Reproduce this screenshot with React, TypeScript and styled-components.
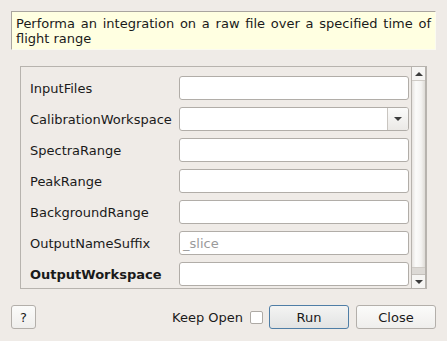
import React from "react";
import styled, { createGlobalStyle } from "styled-components";

const Global = createGlobalStyle`
  html, body { margin: 0; padding: 0; background: #efebe7; }
  body { font-family: "DejaVu Sans", "Noto Sans", sans-serif; font-size: 13px; color: #202020; }
  * { box-sizing: border-box; }
`;

const Dialog = styled.div`
  width: 447px;
  height: 341px;
  display: flex;
  flex-direction: column;
  padding: 11px 11px 12px 11px;
  background: #efebe7;
`;

const Description = styled.div`
  background: #ffffe1;
  border-top: 1px solid #a9a59f;
  border-left: 1px solid #a9a59f;
  border-right: 1px solid #fbfbf0;
  border-bottom: 1px solid #fbfbf0;
  padding: 4px 4px 3px 4px;
  line-height: 15px;
  height: 39px;
  text-align: justify;
  font-size: 13px;
  color: #1a1a1a;
`;

const Frame = styled.div`
  margin: 16px 9px 0 9px;
  height: 223px;
  border: 1px solid #b7b3ae;
  display: flex;
  overflow: hidden;
`;

const Rows = styled.div`
  flex: 1;
  display: flex;
  flex-direction: column;
  gap: 7px;
  padding: 9px 3px 0 9px;
  overflow: hidden;
`;

const Row = styled.div`
  display: grid;
  grid-template-columns: 149px 230px;
  align-items: center;
  height: 24px;
  flex: none;
`;

const Label = styled.span<{ $bold?: boolean }>`
  font-weight: ${(p) => (p.$bold ? "bold" : "normal")};
  white-space: nowrap;
  color: #1a1a1a;
`;

const Field = styled.div`
  height: 24px;
  background: #ffffff;
  border: 1px solid #b1ada8;
  border-radius: 3px;
  display: flex;
  align-items: center;
  padding: 0 3px;
  color: #9a9a9a;
  font-size: 13px;
`;

const Combo = styled.div`
  height: 24px;
  background: #ffffff;
  border: 1px solid #b1ada8;
  border-radius: 3px;
  display: flex;
  overflow: hidden;
`;

const ComboText = styled.div`
  flex: 1;
`;

const ComboButton = styled.div`
  width: 21px;
  border-left: 1px solid #c9c5c0;
  background: linear-gradient(#fbfbfa, #ebe9e6);
  display: flex;
  align-items: center;
  justify-content: center;
`;

const Arrow = styled.div<{ $up?: boolean }>`
  width: 0;
  height: 0;
  border-left: 4px solid transparent;
  border-right: 4px solid transparent;
  ${(p) =>
    p.$up
      ? "border-bottom: 4px solid #3c3c3c;"
      : "border-top: 4px solid #3c3c3c;"}
`;

const ScrollBar = styled.div`
  width: 15px;
  display: flex;
  flex-direction: column;
  border-left: 1px solid #b7b3ae;
  border-right: 1px solid #b7b3ae;
`;

const ScrollButton = styled.div`
  height: 13px;
  flex: none;
  display: flex;
  align-items: center;
  justify-content: center;
  background: #f6f5f3;
`;

const Handle = styled.div`
  flex: 1;
  border-top: 1px solid #cfcbc6;
  border-bottom: 1px solid #cfcbc6;
  background: linear-gradient(to right, #e7e4e1, #fbfbfa 30%, #f4f3f1 70%, #dedbd7);
`;

const Trough = styled.div`
  height: 7px;
  flex: none;
  background: #dcd9d5;
  border-bottom: 1px solid #c4c0bb;
`;

const Footer = styled.div`
  margin-top: 16px;
  display: flex;
  align-items: center;
  height: 24px;
`;

const Button = styled.button<{ $primary?: boolean; $w: number }>`
  width: ${(p) => p.$w}px;
  height: 24px;
  padding: 0;
  font-family: "DejaVu Sans", "Noto Sans", sans-serif;
  font-size: 13px;
  color: #1a1a1a;
  border-radius: 3px;
  border: 1px solid ${(p) => (p.$primary ? "#4f7ea6" : "#b3afaa")};
  background: ${(p) =>
    p.$primary
      ? "linear-gradient(#f4f4f3, #e2e3e3)"
      : "linear-gradient(#fbfbfa, #efeeec)"};
`;

const Spacer = styled.div`
  flex: 1;
`;

const KeepOpen = styled.span`
  margin-right: 7px;
  color: #1a1a1a;
`;

const Check = styled.div`
  width: 13px;
  height: 13px;
  background: #ffffff;
  border: 1px solid #aeaaa5;
  border-radius: 2px;
  margin-right: 6px;
`;

const Gap = styled.div`
  width: 7px;
`;

const fields: { label: string; kind: "text" | "combo"; placeholder?: string; bold?: boolean }[] = [
  { label: "InputFiles", kind: "text" },
  { label: "CalibrationWorkspace", kind: "combo" },
  { label: "SpectraRange", kind: "text" },
  { label: "PeakRange", kind: "text" },
  { label: "BackgroundRange", kind: "text" },
  { label: "OutputNameSuffix", kind: "text", placeholder: "_slice" },
  { label: "OutputWorkspace", kind: "text", bold: true },
];

export default function App() {
  return (
    <>
      <Global />
      <Dialog>
        <Description>
          Performa an integration on a raw file over a specified time of flight range
        </Description>
        <Frame>
          <Rows>
            {fields.map((f) => (
              <Row key={f.label}>
                <Label $bold={f.bold}>{f.label}</Label>
                {f.kind === "combo" ? (
                  <Combo>
                    <ComboText />
                    <ComboButton>
                      <Arrow />
                    </ComboButton>
                  </Combo>
                ) : (
                  <Field>{f.placeholder ?? ""}</Field>
                )}
              </Row>
            ))}
          </Rows>
          <ScrollBar>
            <ScrollButton>
              <Arrow $up />
            </ScrollButton>
            <Handle />
            <Trough />
            <ScrollButton>
              <Arrow />
            </ScrollButton>
          </ScrollBar>
        </Frame>
        <Footer>
          <Button $w={25}>?</Button>
          <Spacer />
          <KeepOpen>Keep Open</KeepOpen>
          <Check />
          <Button $primary $w={80}>Run</Button>
          <Gap />
          <Button $w={80}>Close</Button>
        </Footer>
      </Dialog>
    </>
  );
}
